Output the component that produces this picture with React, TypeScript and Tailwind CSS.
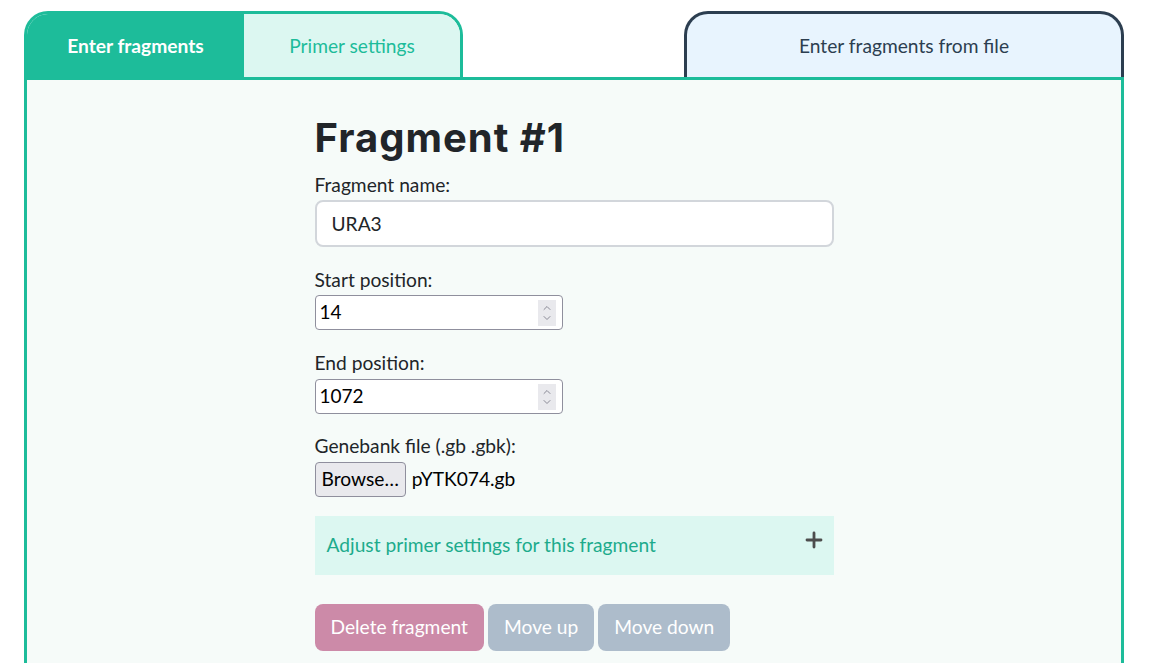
import { ChevronDown, ChevronUp, Plus } from "lucide-react";

const NumberField = ({ value }: { value: string }) => {
    return (
        <div className="flex items-center w-[248px] h-[35px] bg-white border border-[#8f8f9d] rounded-[4px] pl-[4px] pr-[6px]">
            <input readOnly value={value} className="flex-1 min-w-0 bg-transparent outline-none text-[19px] text-black font-['Lato']" />
            <div className="flex flex-col items-center justify-center w-[18px] h-[26px] bg-[#e9e9ed] text-[#8a8a96]">
                <ChevronUp size={12} strokeWidth={2} className="-mb-[1px]" />
                <ChevronDown size={12} strokeWidth={2} className="-mt-[1px]" />
            </div>
        </div>
    )
}

const App = () => {
    return (
        <div className="w-[1156px] h-[663px] overflow-hidden bg-white font-['Lato',sans-serif] text-[#212529]">
            <div className="pl-[24px] pt-[11px] w-[1124px]">
                <div className="flex justify-between items-end h-[66px]">
                    <div className="flex w-[439px] h-full border-[3px] border-b-0 border-[#1dbc9a] rounded-t-[24px] overflow-hidden">
                        <div className="w-[217px] pt-[2px] bg-[#1dbc9a] text-white font-bold text-[19.2px] flex items-center justify-center">Enter fragments</div>
                        <div className="flex-1 pt-[2px] bg-[#dcf7f1] text-[#1dbc9a] text-[19.2px] flex items-center justify-center">Primer settings</div>
                    </div>
                    <div className="w-[440px] h-full pt-[2px] border-[3px] border-b-0 border-[#2c3e50] rounded-t-[24px] bg-[#e8f4fe] text-[#2c3e50] text-[19.2px] flex items-center justify-center">Enter fragments from file</div>
                </div>
                <div className="border-[3px] border-[#1dbc9a] bg-[#f6fbf9] h-[700px]">
                    <div className="w-[519px] mx-auto pt-[34px] text-[19.2px]">
                        <h1 className="font-['Inter'] font-bold text-[40px] leading-[48px] text-[#212529] tracking-[1px]">Fragment #1</h1>
                        <label className="block mt-[11px] leading-[23px]">Fragment name:</label>
                        <input readOnly value="URA3" className="block mt-[4px] w-full h-[47px] bg-white border-2 border-[#d2d6db] rounded-[8px] px-[15px] text-[19.2px] text-[#212529] outline-none" />

                        <label className="block mt-[21px] leading-[23px]">Start position:</label>
                        <div className="mt-[4px]"><NumberField value="14" /></div>

                        <label className="block mt-[21px] leading-[23px]">End position:</label>
                        <div className="mt-[5px]"><NumberField value="1072" /></div>

                        <label className="block mt-[20px] leading-[23px]">Genebank file (.gb .gbk):</label>
                        <div className="flex items-center gap-[6px] mt-[5px]">
                            <button className="h-[35px] px-[6px] bg-[#e9e9ed] border border-[#8f8f9d] rounded-[4px] text-[19.2px] text-black">Browse…</button>
                            <span className="text-black">pYTK074.gb</span>
                        </div>

                        <div className="mt-[19px] h-[59px] bg-[#dcf7f1] flex items-center justify-between pl-[12px] pr-[8px]">
                            <span className="text-[#1dab8c]">Adjust primer settings for this fragment</span>
                            <Plus size={24} strokeWidth={2.8} className="text-[#4d4d4d] -mt-[11px]" />
                        </div>

                        <div className="flex gap-[4px] mt-[29px]">
                            <button className="h-[47px] px-[16px] rounded-[8px] bg-[#cc8aa8] text-white text-[19.2px]">Delete fragment</button>
                            <button className="h-[47px] px-[16px] rounded-[8px] bg-[#adbccb] text-white text-[19.2px]">Move up</button>
                            <button className="h-[47px] px-[16px] rounded-[8px] bg-[#adbccb] text-white text-[19.2px]">Move down</button>
                        </div>
                    </div>
                </div>
            </div>
        </div>
    )
}

export default App
